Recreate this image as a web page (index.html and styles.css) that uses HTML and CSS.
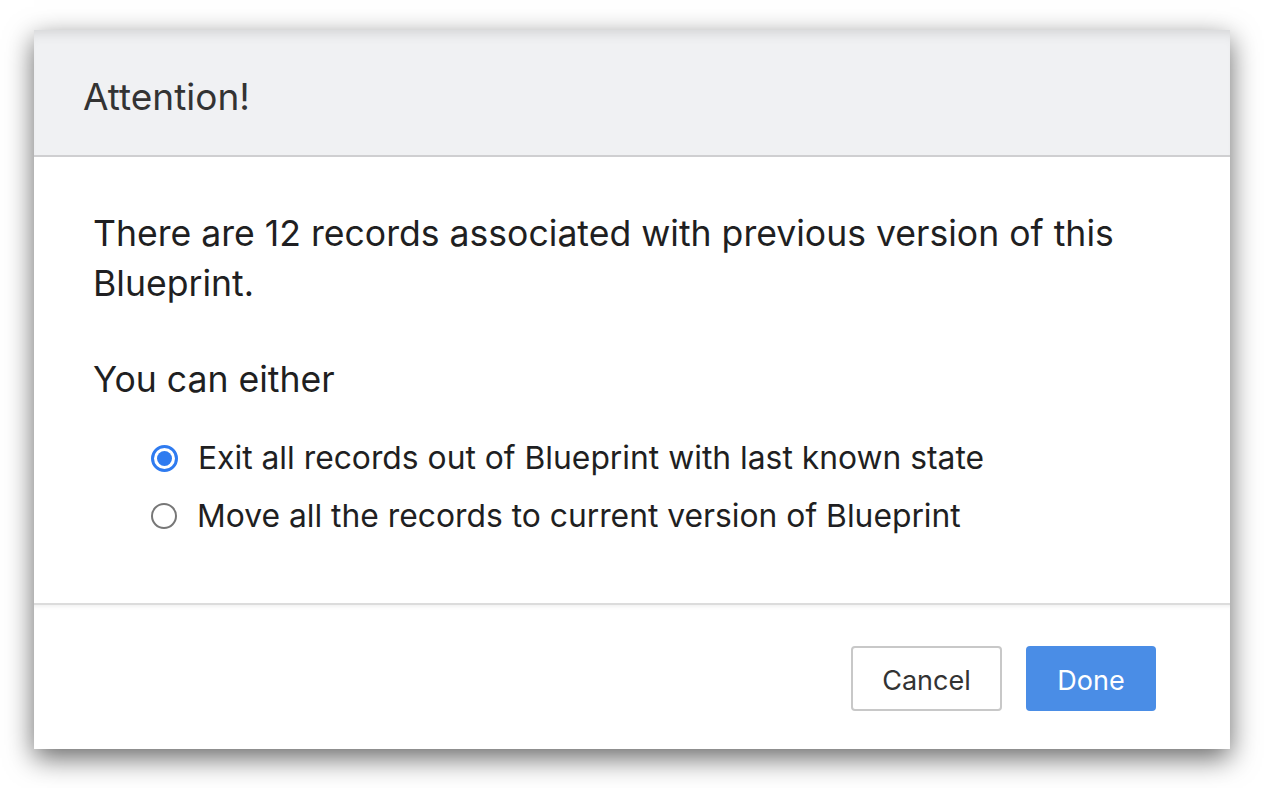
FILE: index.html
```html
<!DOCTYPE html>
<html>
<head>
<meta charset="utf-8">
<link rel="stylesheet" href="styles.css">
</head>
<body>
<div class="dialog">
  <div class="dialog-header">
    <h1 class="dialog-title">Attention!</h1>
  </div>
  <div class="dialog-body">
    <p class="message">There are 12 records associated with previous version of this Blueprint.</p>
    <p class="prompt">You can either</p>
    <div class="options">
      <label class="option">
        <span class="radio checked"></span>
        <span class="option-text">Exit all records out of Blueprint with last known state</span>
      </label>
      <label class="option">
        <span class="radio"></span>
        <span class="option-text">Move all the records to current version of Blueprint</span>
      </label>
    </div>
  </div>
  <div class="dialog-footer">
    <button class="btn btn-cancel">Cancel</button>
    <button class="btn btn-done">Done</button>
  </div>
</div>
</body>
</html>
```
FILE: styles.css
```css
html, body {
  margin: 0;
  padding: 0;
  background: #ffffff;
}
body {
  font-family: Inter, "Noto Sans", sans-serif;
  padding: 30px 0 0 34px;
  min-height: 788px;
  box-sizing: border-box;
}
.dialog {
  width: 1196px;
  height: 719px;
  background: #ffffff;
  box-shadow: 0 9px 26px rgba(0, 0, 0, 0.6);
  display: flex;
  flex-direction: column;
}
.dialog-header {
  height: 125px;
  background: #f0f1f3;
  border-bottom: 2px solid #cfcfd1;
  box-shadow: inset 0 12px 14px -10px rgba(0, 0, 0, 0.14);
  display: flex;
  align-items: center;
  padding-left: 49px;
}
.dialog-title {
  margin: 0;
  font-weight: 400;
  font-size: 37px;
  color: #333333;
  padding-top: 8px;
}
.dialog-body {
  padding: 52px 59px 0 59px;
  height: 394px;
  color: #1f1f22;
  font-size: 35.6px;
}
.message {
  margin: 0;
  line-height: 50px;
  width: 1060px;
}
.prompt {
  margin: 46px 0 0 0;
  line-height: 50px;
}
.options {
  margin-top: 28px;
  padding-left: 58px;
  display: flex;
  flex-direction: column;
  gap: 8px;
}
.option {
  display: flex;
  align-items: center;
  gap: 20px;
  font-size: 31.8px;
  line-height: 50px;
}
.radio {
  width: 22px;
  height: 22px;
  border-radius: 50%;
  border: 2px solid #777777;
  box-sizing: content-box;
  flex: none;
  position: relative;
}
.radio.checked {
  border: 3px solid #2f7bf0;
  width: 21px;
  height: 21px;
}
.radio.checked::after {
  content: "";
  position: absolute;
  left: 3px;
  top: 3px;
  width: 15px;
  height: 15px;
  border-radius: 50%;
  background: #2f7bf0;
}
.dialog-footer {
  flex: 1;
  border-top: 2px solid #dcdcdc;
  box-shadow: inset 0 4px 4px -3px rgba(0, 0, 0, 0.08);
  display: flex;
  justify-content: flex-end;
  align-items: flex-start;
  padding: 41px 74px 0 0;
  gap: 24px;
}
.btn {
  height: 65px;
  border-radius: 4px;
  font-family: Inter, "Noto Sans", sans-serif;
  font-size: 27px;
  padding-top: 4px;
  cursor: pointer;
}
.btn-cancel {
  width: 151px;
  background: #ffffff;
  border: 2px solid #c8c8c8;
  color: #333333;
}
.btn-done {
  width: 130px;
  background: #4a8de6;
  border: none;
  color: #ffffff;
}
```
